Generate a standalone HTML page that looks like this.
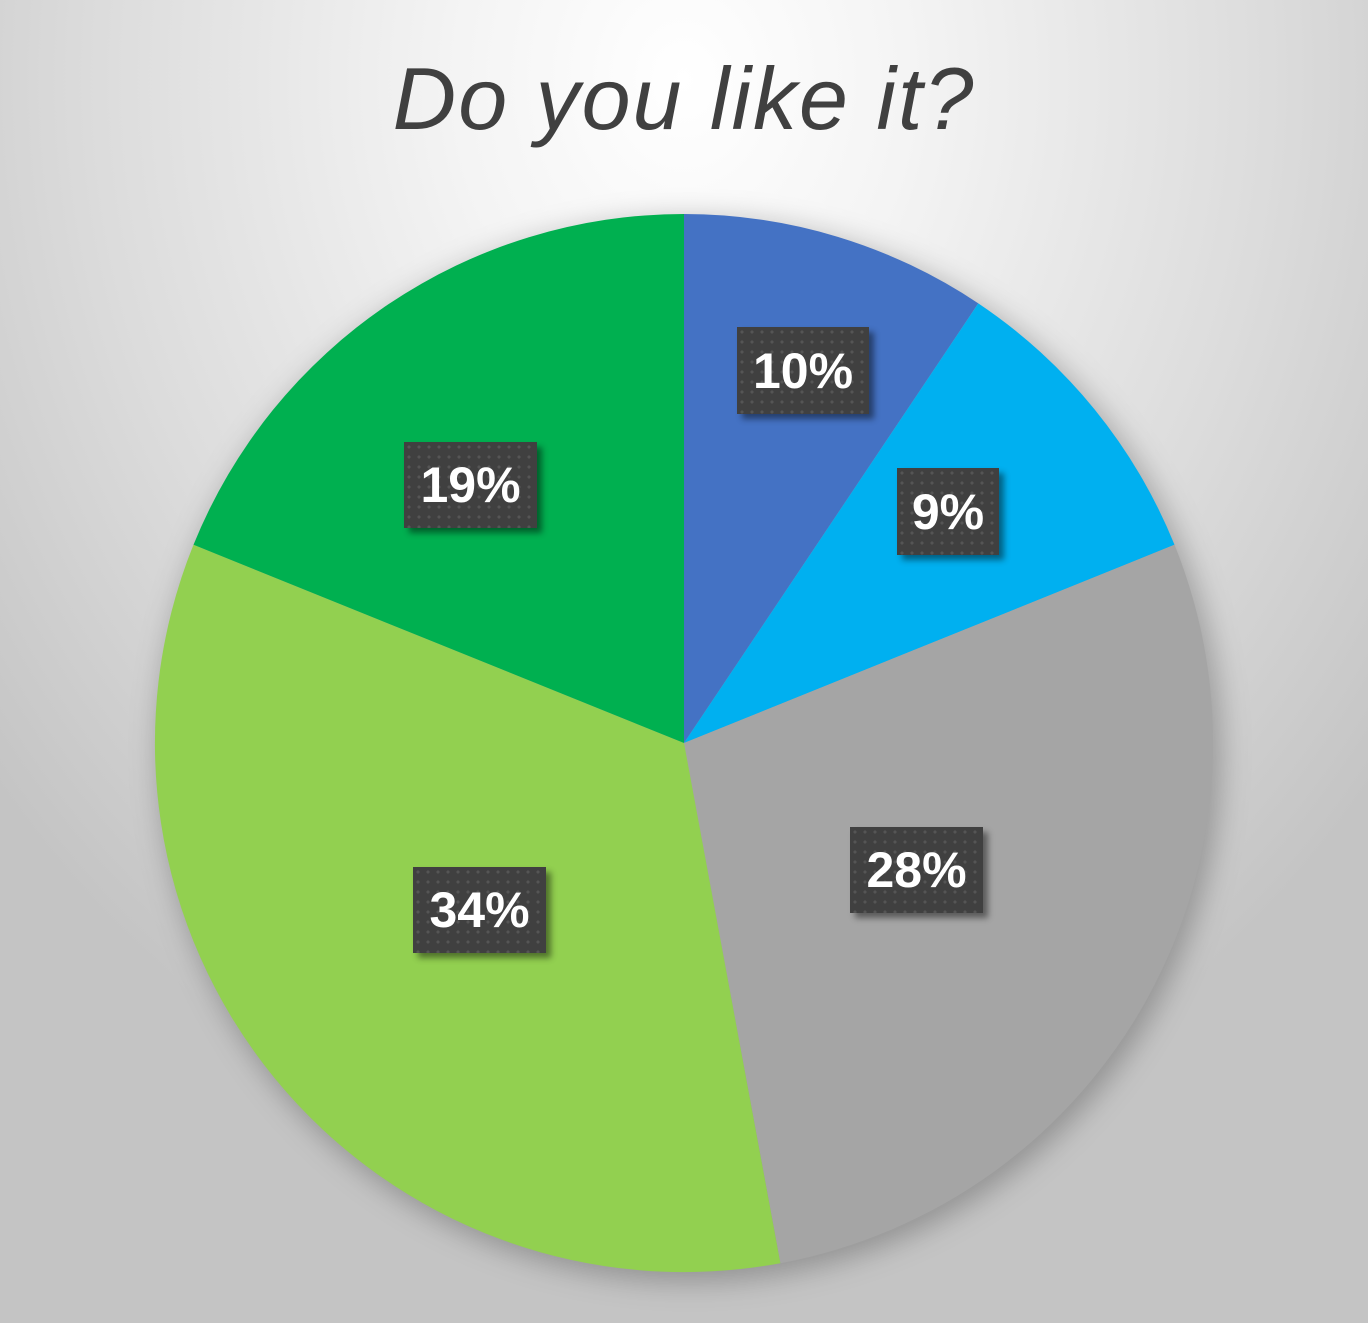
<!DOCTYPE html>
<html><head><style>
html,body{margin:0;padding:0;width:1368px;height:1323px;overflow:hidden}
body{background:radial-gradient(ellipse 900px 1100px at 684px 80px,#ffffff 0%,#f4f4f4 25%,#dcdcdc 65%,#c4c4c4 100%)}
.t{position:absolute;left:0;width:1368px;top:48px;text-align:center;font:italic 88px "Liberation Sans",sans-serif;color:#404040;letter-spacing:2px}
.l{position:absolute;background-color:#404040;background-image:radial-gradient(#555 1.5px,transparent 1.6px);background-size:10px 10px;color:#fff;font:bold 50px "Liberation Sans",sans-serif;display:flex;align-items:center;justify-content:center;box-shadow:5px 5px 6px rgba(0,0,0,.45)}
</style></head><body>
<div class="t">Do you like it?</div>
<svg width="1368" height="1323" style="position:absolute;left:0;top:0">
<defs><filter id="s" x="-20%" y="-20%" width="140%" height="140%"><feGaussianBlur stdDeviation="14"/></filter></defs>
<circle cx="690" cy="750" r="532" fill="rgba(0,0,0,.25)" filter="url(#s)"/>
<path d="M684 743 L684 214 A529 529 0 0 1 978.3 303.4Z" fill="#4472C4"/>
<path d="M684 743 L978.3 303.4 A529 529 0 0 1 1174.5 544.8Z" fill="#00B0F0"/>
<path d="M684 743 L1174.5 544.8 A529 529 0 0 1 780.4 1263.2Z" fill="#A5A5A5"/>
<path d="M684 743 L780.4 1263.2 A529 529 0 0 1 193.5 544.8Z" fill="#92D050"/>
<path d="M684 743 L193.5 544.8 A529 529 0 0 1 684 214Z" fill="#00B050"/>
</svg>
<div class="l" style="left:737px;top:327px;width:132px;height:87px">10%</div>
<div class="l" style="left:897px;top:468px;width:102px;height:87px">9%</div>
<div class="l" style="left:850px;top:827px;width:133px;height:86px">28%</div>
<div class="l" style="left:413px;top:867px;width:133px;height:86px">34%</div>
<div class="l" style="left:404px;top:442px;width:133px;height:86px">19%</div>
</body></html>
